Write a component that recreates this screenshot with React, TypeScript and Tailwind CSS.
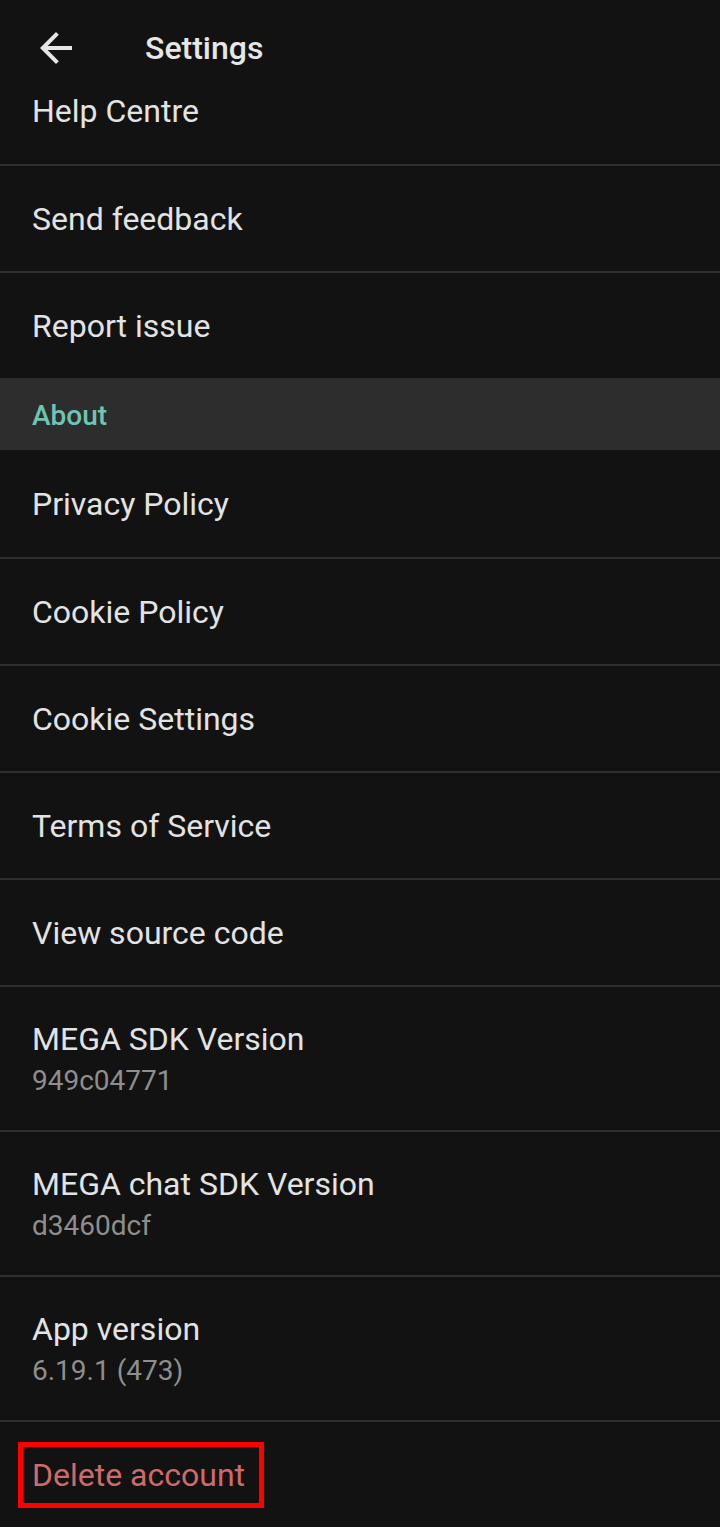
import React from "react";

const Divider = () => <div className="h-[2px] bg-[#2f2f2f]" />;

function Row({ label, h = "h-[105px]" }: { label: string; h?: string }) {
  return (
    <div className={`${h} flex items-center pl-[32px]`}>
      <span className="text-[32px] leading-[38px] text-[#e3e3e3]">{label}</span>
    </div>
  );
}

function TwoLine({ label, sub }: { label: string; sub: string }) {
  return (
    <div className="h-[143px] flex flex-col justify-center pl-[32px]">
      <span className="text-[32px] leading-[38px] text-[#e3e3e3]">{label}</span>
      <span className="text-[28px] leading-[34px] mt-[6px] text-[#8e8e8e]">{sub}</span>
    </div>
  );
}

export default function App() {
  return (
    <div
      className="w-[720px] h-[1527px] overflow-hidden bg-[#121212] flex flex-col"
      style={{ fontFamily: "Roboto, 'Noto Sans', sans-serif" }}
    >
      <div className="h-[96px] shrink-0 flex items-center pl-[32px]">
        <svg width="48" height="48" viewBox="0 0 24 24" fill="#e6e6e6">
          <path d="M20 11H7.83l5.59-5.59L12 4l-8 8 8 8 1.41-1.41L7.83 13H20v-2z" />
        </svg>
        <span className="ml-[65px] text-[32px] leading-[38px] font-medium text-[#e6e6e6]">Settings</span>
      </div>
      <div className="h-[68px] shrink-0 pl-[32px]">
        <span className="block text-[32px] leading-[30px] text-[#e3e3e3]">Help Centre</span>
      </div>
      <Divider />
      <Row label="Send feedback" />
      <Divider />
      <Row label="Report issue" />
      <div className="h-[72px] shrink-0 bg-[#2d2d2d] flex items-center pl-[32px] pt-[4px]">
        <span className="text-[28px] leading-[34px] font-medium text-[#6fc4b2]">About</span>
      </div>
      <Row label="Privacy Policy" h="h-[107px]" />
      <Divider />
      <Row label="Cookie Policy" />
      <Divider />
      <Row label="Cookie Settings" />
      <Divider />
      <Row label="Terms of Service" />
      <Divider />
      <Row label="View source code" />
      <Divider />
      <TwoLine label="MEGA SDK Version" sub="949c04771" />
      <Divider />
      <TwoLine label="MEGA chat SDK Version" sub="d3460dcf" />
      <Divider />
      <TwoLine label="App version" sub="6.19.1 (473)" />
      <Divider />
      <div className="h-[105px] shrink-0 flex items-center pl-[32px]">
        <span className="relative text-[32px] leading-[38px] text-[#d06a6a]">
          Delete account
          <span className="absolute left-[-14px] right-[-19px] top-[-14px] bottom-[-14px] border-[5px] border-[#ff0000]" />
        </span>
      </div>
    </div>
  );
}
